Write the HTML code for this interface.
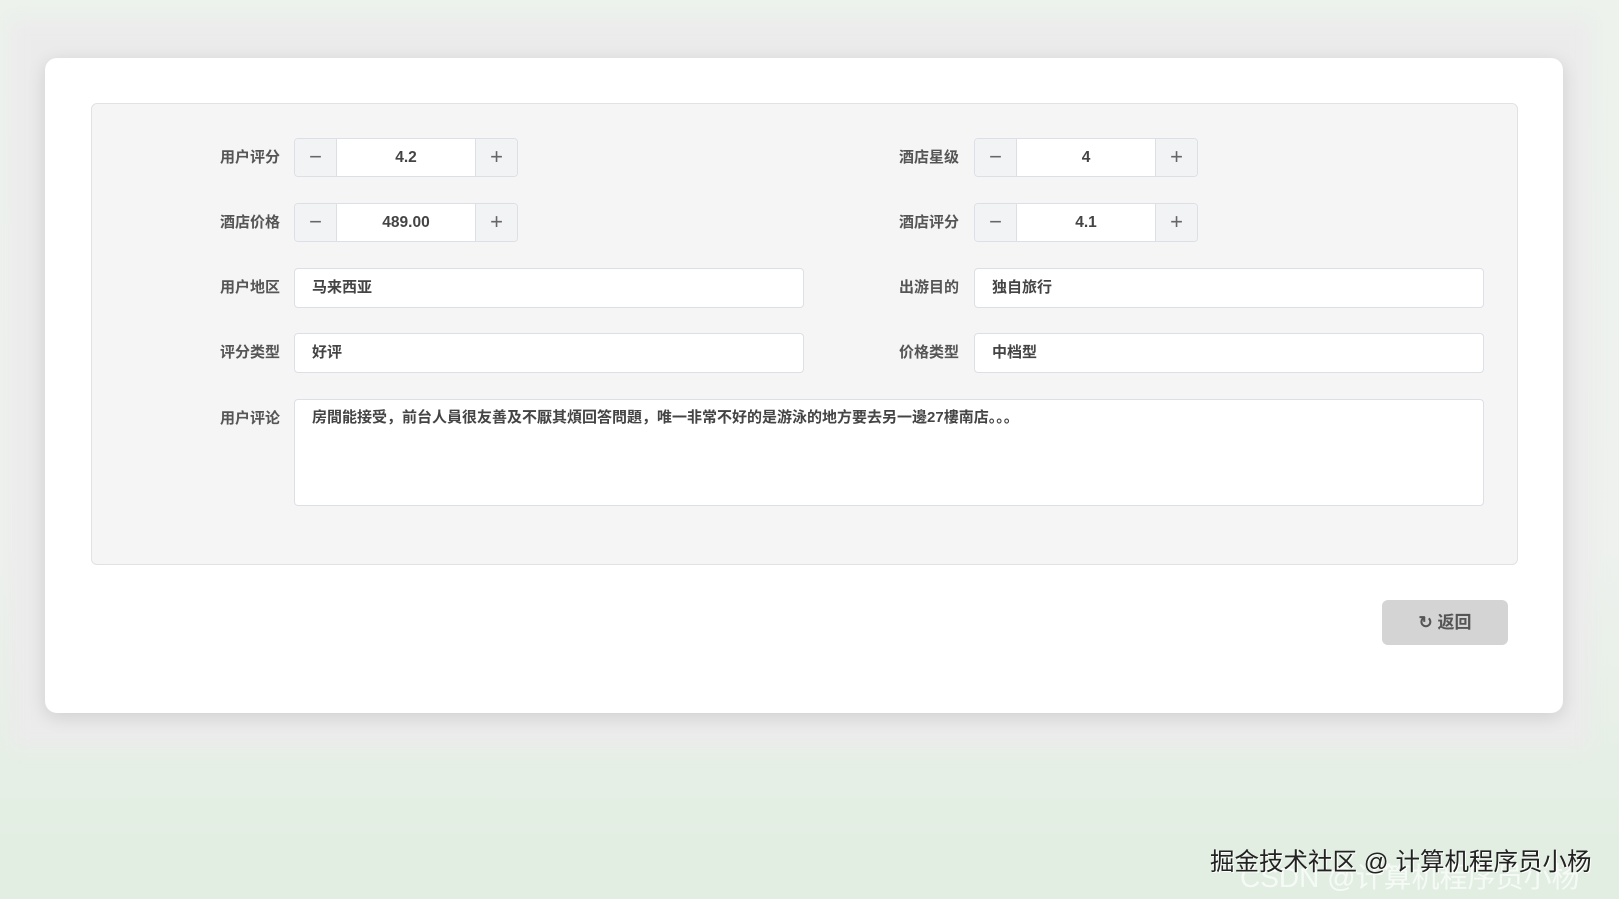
<!DOCTYPE html>
<html><head><meta charset="utf-8"><style>
*{box-sizing:border-box;margin:0;padding:0}
body{width:1619px;height:899px;overflow:hidden;background:linear-gradient(180deg,#edf2ed 0%,#eef1ee 60%,#e1eee1 100%);font-family:"Liberation Sans","Noto Sans CJK SC",sans-serif;position:relative;color:#333}
.shade{position:absolute;left:10px;top:20px;width:1580px;height:728px;background:#ebebeb;filter:blur(8px)}
.card{position:absolute;left:45px;top:58px;width:1518px;height:655px;background:#fff;border-radius:12px;box-shadow:0 4px 18px rgba(0,0,0,.12)}
.panel{position:absolute;left:91px;top:103px;width:1427px;height:462px;background:#f5f5f5;border:1px solid #e2e2e2;border-radius:6px}
.lab{position:absolute;width:90px;text-align:right;font-size:15px;font-weight:bold;color:#555;line-height:39px}
.num{position:absolute;width:224px;height:39px;border:1px solid #dcdfe6;border-radius:4px;background:#fff;display:flex;overflow:hidden}
.num span{width:42px;background:#f2f3f5;color:#666;font-size:22px;text-align:center;line-height:36px;font-weight:300}
.num span:first-child{border-right:1px solid #dcdfe6}
.num span:last-child{border-left:1px solid #dcdfe6}
.num b{flex:1;text-align:center;font-weight:bold;font-size:15.5px;line-height:37px;color:#444}
.inp{position:absolute;height:40px;border:1px solid #dcdfe6;border-radius:4px;background:#fff;padding-left:17px;font-size:15px;font-weight:bold;color:#444;line-height:38px}
.btn{position:absolute;left:1382px;top:600px;width:126px;height:45px;background:#d4d4d4;border-radius:6px;font-size:17px;color:#555;text-align:center;line-height:45px;font-weight:bold}
.wm{position:absolute;left:1210px;top:843px;font-size:24.5px;color:#222;text-shadow:1px 1px 0 #fff}
.wm2{position:absolute;left:1240px;top:856px;font-size:28px;color:rgba(255,255,255,.7)}
</style></head><body>
<div class="shade"></div>
<div class="card"></div>
<div class="panel"></div>
<div class="lab" style="left:190px;top:138px">用户评分</div>
<div class="num" style="left:294px;top:138px"><span>−</span><b>4.2</b><span>+</span></div>
<div class="lab" style="left:869px;top:138px">酒店星级</div>
<div class="num" style="left:974px;top:138px"><span>−</span><b>4</b><span>+</span></div>
<div class="lab" style="left:190px;top:203px">酒店价格</div>
<div class="num" style="left:294px;top:203px"><span>−</span><b>489.00</b><span>+</span></div>
<div class="lab" style="left:869px;top:203px">酒店评分</div>
<div class="num" style="left:974px;top:203px"><span>−</span><b>4.1</b><span>+</span></div>
<div class="lab" style="left:190px;top:268px">用户地区</div>
<div class="inp" style="left:294px;top:268px;width:510px">马来西亚</div>
<div class="lab" style="left:869px;top:268px">出游目的</div>
<div class="inp" style="left:974px;top:268px;width:510px">独自旅行</div>
<div class="lab" style="left:190px;top:333px">评分类型</div>
<div class="inp" style="left:294px;top:333px;width:510px">好评</div>
<div class="lab" style="left:869px;top:333px">价格类型</div>
<div class="inp" style="left:974px;top:333px;width:510px">中档型</div>
<div class="lab" style="left:190px;top:399px">用户评论</div>
<div class="inp" style="left:294px;top:399px;width:1190px;height:107px;line-height:36px">房間能接受，前台人員很友善及不厭其煩回答問題，唯一非常不好的是游泳的地方要去另一邊27樓南店。。。</div>
<div class="btn">↻ 返回</div>
<div class="wm2">CSDN @计算机程序员小杨</div>
<div class="wm">掘金技术社区 @ 计算机程序员小杨</div>
</body></html>
